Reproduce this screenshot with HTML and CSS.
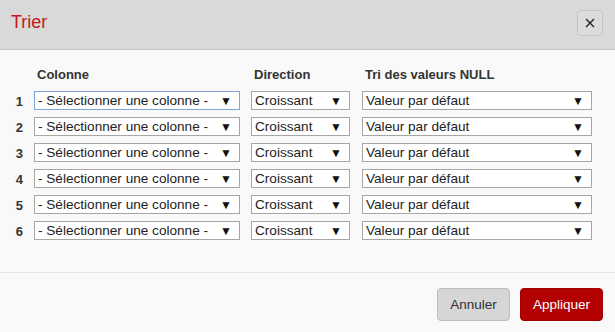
FILE: index.html
```html
<!DOCTYPE html>
<html lang="fr">
<head>
<meta charset="utf-8">
<link rel="stylesheet" href="styles.css">
</head>
<body>
<div class="dialog">
  <div class="header">
    <h1 class="title">Trier</h1>
    <button class="close" aria-label="Fermer">
      <svg width="10" height="10" viewBox="0 0 10 10"><path d="M1 1L9 9M9 1L1 9" stroke="#222" stroke-width="1.4"/></svg>
    </button>
  </div>
  <div class="content">
    <div class="grid">
      <div></div>
      <div class="colhead">Colonne</div>
      <div class="colhead">Direction</div>
      <div class="colhead">Tri des valeurs NULL</div>

      <div class="num">1</div>
      <div class="sel focus"><span>- Sélectionner une colonne -</span><span class="arr">▼</span></div>
      <div class="sel"><span>Croissant</span><span class="arr">▼</span></div>
      <div class="sel"><span>Valeur par défaut</span><span class="arr">▼</span></div>

      <div class="num">2</div>
      <div class="sel"><span>- Sélectionner une colonne -</span><span class="arr">▼</span></div>
      <div class="sel"><span>Croissant</span><span class="arr">▼</span></div>
      <div class="sel"><span>Valeur par défaut</span><span class="arr">▼</span></div>

      <div class="num">3</div>
      <div class="sel"><span>- Sélectionner une colonne -</span><span class="arr">▼</span></div>
      <div class="sel"><span>Croissant</span><span class="arr">▼</span></div>
      <div class="sel"><span>Valeur par défaut</span><span class="arr">▼</span></div>

      <div class="num">4</div>
      <div class="sel"><span>- Sélectionner une colonne -</span><span class="arr">▼</span></div>
      <div class="sel"><span>Croissant</span><span class="arr">▼</span></div>
      <div class="sel"><span>Valeur par défaut</span><span class="arr">▼</span></div>

      <div class="num">5</div>
      <div class="sel"><span>- Sélectionner une colonne -</span><span class="arr">▼</span></div>
      <div class="sel"><span>Croissant</span><span class="arr">▼</span></div>
      <div class="sel"><span>Valeur par défaut</span><span class="arr">▼</span></div>

      <div class="num">6</div>
      <div class="sel"><span>- Sélectionner une colonne -</span><span class="arr">▼</span></div>
      <div class="sel"><span>Croissant</span><span class="arr">▼</span></div>
      <div class="sel"><span>Valeur par défaut</span><span class="arr">▼</span></div>
    </div>
  </div>
  <div class="footer">
    <button class="btn cancel">Annuler</button>
    <button class="btn apply">Appliquer</button>
  </div>
</div>
</body>
</html>
```
FILE: styles.css
```css
* { box-sizing: border-box; }
html, body { margin: 0; padding: 0; }
body {
  width: 615px;
  height: 332px;
  background: #f9f9f9;
  font-family: "Liberation Sans", Arial, sans-serif;
  color: #222;
  overflow: hidden;
}
.dialog { display: flex; flex-direction: column; height: 332px; }
.header {
  height: 50px;
  background: #d9d9d9;
  border-bottom: 1px solid #c2c2c2;
  display: flex;
  align-items: center;
  justify-content: space-between;
  padding: 0 12px 4px 11px;
}
.title {
  margin: 0;
  font-size: 18px;
  font-weight: normal;
  color: #c8171e;
}
.close {
  width: 26px;
  height: 26px;
  padding: 0;
  border: 1px solid #c6c6c6;
  border-radius: 4px;
  background: #dcdcdc;
  display: flex;
  align-items: center;
  justify-content: center;
}
.content {
  padding: 17px 0 0 0;
  height: 223px;
  border-bottom: 1px solid #e6e6e6;
}
.grid {
  display: grid;
  grid-template-columns: 23px 206px 99px 231px;
  column-gap: 11px;
  row-gap: 7px;
  align-items: center;
}
.grid > .colhead:nth-child(4) { margin-left: 1px; }
.colhead {
  font-size: 13px;
  font-weight: bold;
  color: #333;
  padding-left: 3px;
  height: 17px;
}
.num {
  font-size: 13px;
  font-weight: bold;
  color: #333;
  text-align: right;
  padding-top: 2px;
}
.sel {
  height: 19px;
  border: 1px solid #a6a6a6;
  background: #fff;
  display: flex;
  align-items: center;
  justify-content: space-between;
  padding: 0 7px 0 3px;
  font-size: 13.6px;
  color: #222;
  white-space: nowrap;
}
.sel.focus { border-color: #7fa6dc; }
.grid > .sel:nth-child(4n) { margin-left: 1px; }
.arr { font-size: 12px; color: #111; }
.footer {
  flex: 1;
  display: flex;
  justify-content: flex-end;
  align-items: flex-start;
  gap: 10px;
  padding: 15px 12px 0 0;
}
.btn {
  height: 33px;
  border-radius: 4px;
  font-family: "Liberation Sans", Arial, sans-serif;
  font-size: 13.5px;
  padding: 0;
}
.cancel {
  width: 73px;
  background: #d6d6d6;
  border: 1px solid #bdbdbd;
  color: #333;
}
.apply {
  width: 83px;
  background: #b30000;
  border: 1px solid #a00000;
  color: #fff;
}
```
